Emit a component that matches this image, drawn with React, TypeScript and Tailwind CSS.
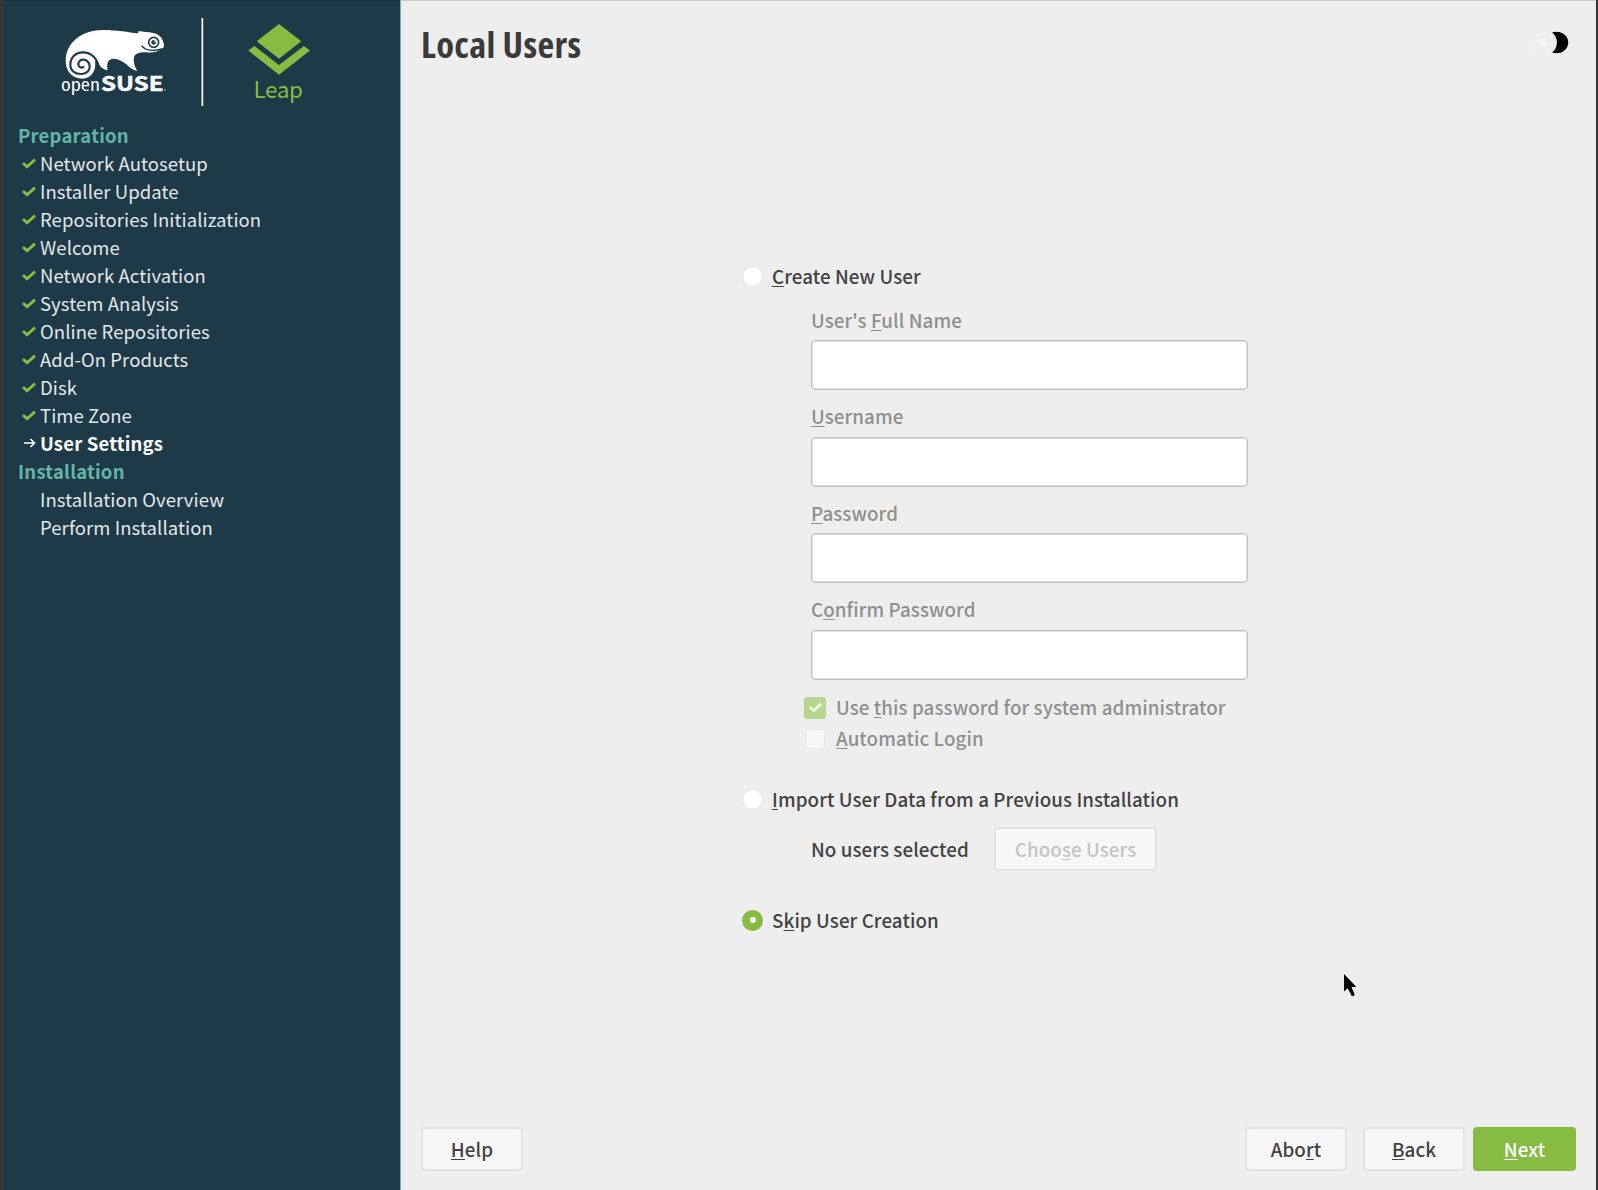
import React from "react";

const done = [
  "Network Autosetup",
  "Installer Update",
  "Repositories Initialization",
  "Welcome",
  "Network Activation",
  "System Analysis",
  "Online Repositories",
  "Add-On Products",
  "Disk",
  "Time Zone",
];

/* Label with its keyboard mnemonic underlined; "_" precedes the mnemonic. */
function Mnemonic({ text }: { text: string }) {
  const i = text.indexOf("_");
  return (
    <span className="whitespace-pre">
      {text.slice(0, i)}
      <span className="underline decoration-1 underline-offset-[2px] [text-decoration-skip-ink:none]">{text[i + 1]}</span>
      {text.slice(i + 2)}
    </span>
  );
}

function Check({ className }: { className: string }) {
  return (
    <svg viewBox="0 0 14 11" className={className} fill="none" stroke="currentColor" strokeWidth="3">
      <path d="M1 5 L5 8.8 L13 1.6" />
    </svg>
  );
}

/* Chameleon and "openSUSE" wordmark, divider, and the Leap mark. */
function Logos({ className }: { className: string }) {
  return (
    <svg viewBox="4 1 396 120" className={className}>
      <g transform="translate(50 15) scale(.3333)" fill="none">
        <path d="M264 55 L266 48 C280 50 296 52 306 53 C326 56 338 68 340 82 C344 92 343 98 334 103 C322 112 305 114 288 112 C272 111 258 115 253 124 C249 136 252 152 262 168 C246 164 238 156 228 147 C214 136 200 130 188 131 C174 133 169 146 173 166 C158 163 150 155 145 143 L135 138 C140 166 124 191 97 191 C66 191 47 168 47 138 C47 84 94 45 160 45 C200 45 236 52 264 55Z" fill="#fff" />
        <path d="M147 160 C142 128 122 112 99 112 C75 112 61 129 61 149 C61 168 77 178 95 177 C111 176 120 166 119 153 C118 140 108 133 98 134 C88 135 83 144 86 152 C89 159 98 160 102 154" stroke="#1e3947" strokeWidth="6.5" />
        <circle cx="311" cy="82" r="15" stroke="#1e3947" strokeWidth="5" />
        <circle cx="311" cy="82" r="7" fill="#1e3947" />
        <circle cx="314" cy="79" r="2.6" fill="#fff" />
        <path d="M275 92 C286 106 310 110 339 101" stroke="#1e3947" strokeWidth="4.5" />
      </g>
      <text x="61" y="91.3" fill="#fff" fontSize="18" textLength="39" lengthAdjust="spacingAndGlyphs" className="font-['Open_Sans',sans-serif] [font-stretch:87%]">open</text>
      <text x="101" y="91.3" fill="#fff" stroke="#fff" strokeWidth=".5" fontSize="20.5" fontWeight="700" textLength="62.5" lengthAdjust="spacingAndGlyphs" className="font-['Noto_Sans_CJK_SC',sans-serif]">SUSE</text>
      <circle cx="165" cy="89.8" r=".8" fill="#c5cdd1" />
      <rect x="201.5" y="18" width="1.7" height="88" fill="#fff" />
      <path d="M279 24 L301.3 41.3 L279 58.7 L256.7 41.3Z M248.3 50.6 L254.4 46 L279 65 L303.8 46 L310 50.6 L279 74.7Z" fill="#85bc41" />
      <text x="253.5" y="97.7" fill="#85bc41" fontSize="22.5" textLength="49.5" className="font-['Noto_Sans_CJK_SC',sans-serif]">Leap</text>
    </svg>
  );
}

function Field({ label }: { label: string }) {
  return (
    <div className="mb-[12.5px] flex h-[84px] w-[437px] flex-col justify-between">
      <div className="-mt-[0.4px] h-7 leading-7 text-[#8f8f8f]"><Mnemonic text={label} /></div>
      <input className="h-[50px] w-full rounded-[4px] border border-[#c0c0c0] bg-white shadow-[inset_0_0_0_1px_#e2e2e2] outline-none" />
    </div>
  );
}

function Radio({ label, on = false }: { label: string; on?: boolean }) {
  return (
    <div className="flex h-7 items-center">
      {on ? (
        <span className="flex size-[21px] items-center justify-center rounded-full bg-[#85bc41]">
          <span className="size-[6px] rounded-full bg-white" />
        </span>
      ) : (
        <span className="size-[21px] rounded-full border border-[#dfe3f0] bg-white" />
      )}
      <span className="ml-[9px] leading-7"><Mnemonic text={label} /></span>
    </div>
  );
}

function Button({ label, className }: { label: string; className: string }) {
  return (
    <button className={`flex h-[44px] items-center justify-center rounded-[4px] border-2 ${className}`}>
      <Mnemonic text={label} />
    </button>
  );
}

export default function App() {
  return (
    <div className="flex h-[1190px] w-[1598px] overflow-hidden border-r-2 border-l-4 border-r-[#333] border-l-[#363636] bg-[#eee] font-['Noto_Sans_CJK_SC','Noto_Sans',sans-serif] text-[18.5px] text-[#424242]">
      <aside className="flex w-[396px] shrink-0 flex-col border-t border-[#1a303c] bg-[#1e3947] text-[#e3e7e9]">
        <Logos className="h-[120px] w-[396px] shrink-0" />
        <nav className="ml-[14px] leading-7 tracking-[0.08px]">
          <div className="font-bold tracking-[0.22px] text-[#62b6a8]">Preparation</div>
          {done.map((t) => (
            <div key={t} className="flex h-7 items-center">
              <Check className="ml-1 h-[11px] w-[14px] text-[#85bc41]" />
              <span className="ml-1">{t}</span>
            </div>
          ))}
          <div className="flex h-7 items-center font-bold tracking-[0.18px] text-white">
            <svg viewBox="0 0 12 10" className="mr-1 ml-[6px] h-[10px] w-3" fill="none" stroke="currentColor" strokeWidth="1.6"><path d="M0 5H10M6.5 1L10.5 5L6.5 9" /></svg>
            <span>User Settings</span>
          </div>
          <div className="font-bold tracking-[0.22px] text-[#62b6a8]">Installation</div>
          <div className="ml-[22px]">Installation Overview</div>
          <div className="ml-[22px]">Perform Installation</div>
        </nav>
      </aside>
      <main className="flex grow flex-col border-t border-l border-t-[#c9c9c9] border-l-[#93a0a8] pr-[20px] pl-[20px] text-[18.75px] font-medium tracking-[0.09px]">
        <header className="flex h-[86px] items-center justify-between">
          <h1 className="font-['Open_Sans',sans-serif] text-[36.5px] font-bold tracking-[0.35px] text-[#3a3a3a] [font-stretch:75%]">Local Users</h1>
          <svg viewBox="1532 29 44 30" className="h-[30px] w-[44px]">
            <circle cx="1542.5" cy="42.5" r="4.5" fill="#f6f6f6" />
            <circle cx="1542.5" cy="42.5" r="9" fill="none" stroke="#f3f3f3" strokeWidth="2" strokeDasharray="2 5.07" />
            <path d="M1552 32.5 C1561 29.5 1568.3 35.5 1568.3 42.5 C1568.3 49.5 1561 55.5 1552 52.5 C1558.6 48 1558.6 37 1552 32.5Z" fill="#000" />
          </svg>
        </header>
        <section className="mt-[175px] ml-[321px] flex grow flex-col">
          <Radio label="_Create New User" />
          <div className="mt-4 ml-[69px]">
            {["User's _Full Name", "_Username", "_Password", "C_onfirm Password"].map((l) => <Field key={l} label={l} />)}
          </div>
          <div className="ml-[62px] text-[#8f8f8f]">
            <div className="flex h-[31px] items-center">
              <span className="flex size-[22px] items-center justify-center rounded-[3px] bg-[#b7d78f] text-[#eef5e4]"><Check className="h-[11px] w-[13px]" /></span>
              <span className="ml-[10px]"><Mnemonic text="Use _this password for system administrator" /></span>
            </div>
            <div className="flex h-[31px] items-center">
              <span className="mr-[1px] ml-[1px] size-[20px] rounded-[3px] border border-[#dfe7f0] bg-[#f7f7f7]" />
              <span className="ml-[10px]"><Mnemonic text="_Automatic Login" /></span>
            </div>
          </div>
          <div className="mt-[31px]"><Radio label="_Import User Data from a Previous Installation" /></div>
          <div className="mt-[14px] ml-[69px] flex items-center">
            <span className="w-[183px]">No users selected</span>
            <Button label="Choo_se Users" className="w-[163px] border-[#e2e2e2] bg-[#f7f7f7] text-[#c4c4c4]" />
          </div>
          <div className="mt-[35px]"><Radio label="S_kip User Creation" on /></div>
          <svg viewBox="0 0 14 24" className="mt-[40px] ml-[602px] h-6 w-[14px]"><path d="M0 0V17.5L3.7 14.2L8 22.5L10.8 21L7.5 13H12.5Z" fill="#000" /></svg>
        </section>
        <footer className="mb-[19px] flex h-[44px]">
          <Button label="_Help" className="w-[102px] border-[#e2e2e2] bg-[#f7f7f7]" />
          <Button label="Abo_rt" className="ml-auto w-[102px] border-[#e2e2e2] bg-[#f7f7f7]" />
          <Button label="_Back" className="ml-4 w-[102px] border-[#e2e2e2] bg-[#f7f7f7]" />
          <Button label="_Next" className="ml-2 w-[103px] border-[#85bc41] bg-[#85bc41] text-white" />
        </footer>
      </main>
    </div>
  );
}
